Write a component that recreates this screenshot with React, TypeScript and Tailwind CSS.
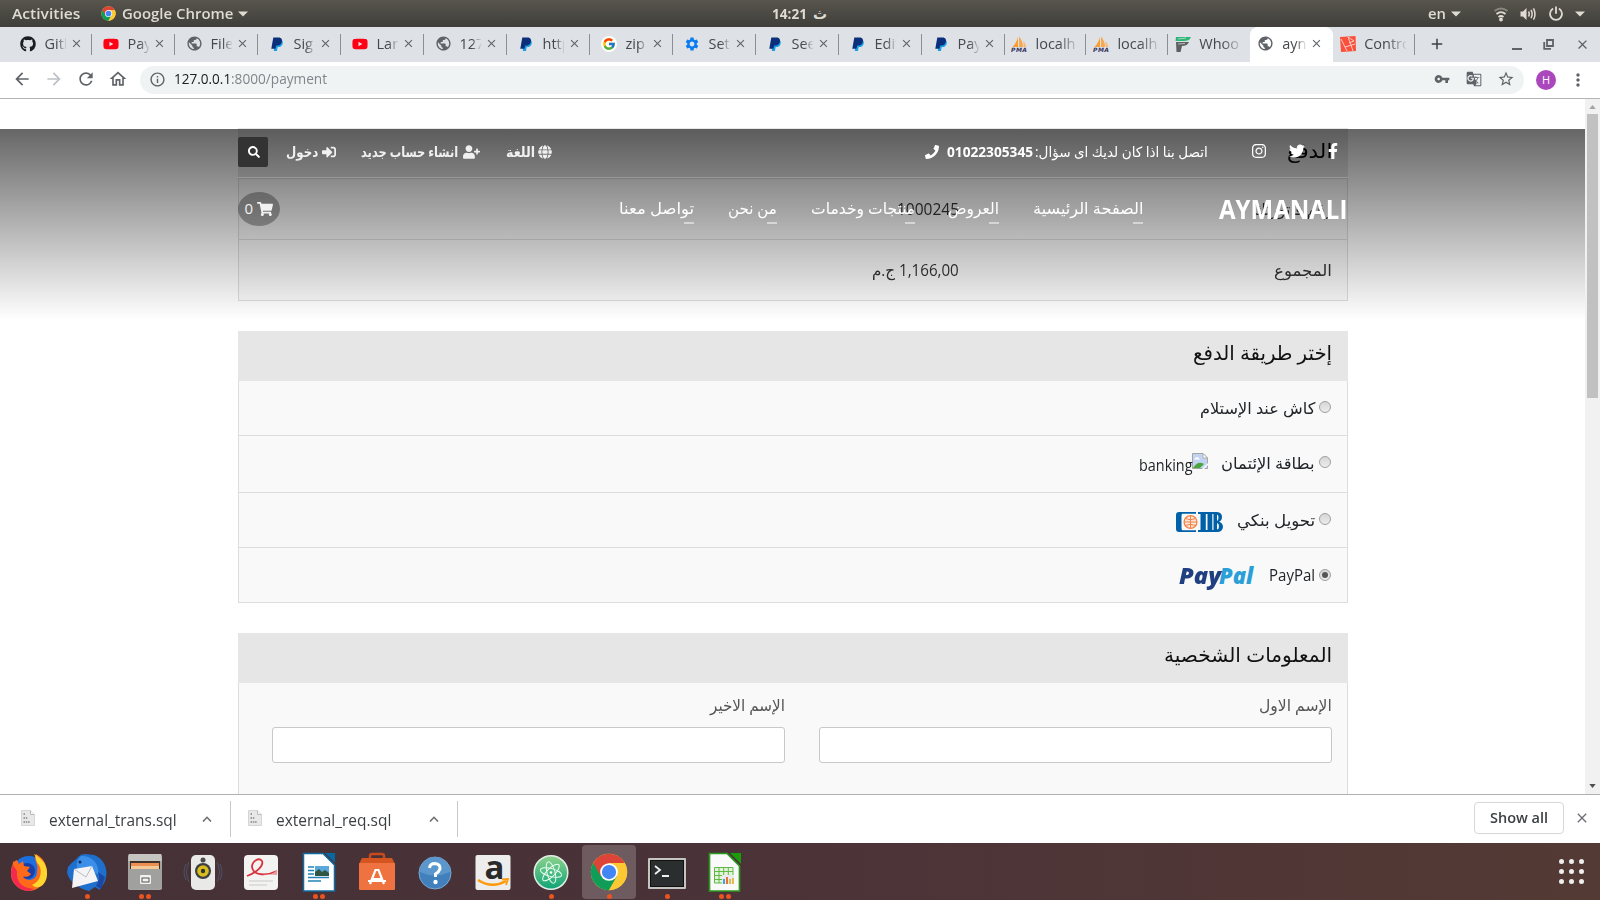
import { useLayoutEffect, useRef, useState, type ReactNode } from 'react';
import { FaFacebookF, FaGithub, FaGlobe, FaInstagram, FaPhone, FaSearch, FaShoppingCart, FaSignInAlt, FaTwitter, FaUserPlus, FaYoutube } from 'react-icons/fa';
import { FcGoogle } from 'react-icons/fc';
import { MdAdd, MdArrowBack, MdArrowForward, MdClose, MdGTranslate, MdInfoOutline, MdMoreVert, MdOutlineHome, MdPublic, MdRefresh, MdSettings, MdStarBorder, MdVpnKey } from 'react-icons/md';

/* One line of text condensed or widened so that it fills its box. */
function Fit({ className = '', children }: { className?: string; children: ReactNode }) {
  const box = useRef<HTMLSpanElement>(null);
  const inner = useRef<HTMLSpanElement>(null);
  const [scale, setScale] = useState(1);
  useLayoutEffect(() => {
    if (box.current && inner.current) setScale(box.current.offsetWidth / inner.current.offsetWidth);
  }, [children]);
  return (
    <span ref={box} className={`block shrink-0 whitespace-nowrap ${className}`}>
      <span ref={inner} className="block w-max origin-left rtl:origin-right" style={{ transform: `scaleX(${scale})` }}>
        {children}
      </span>
    </span>
  );
}

function ChromeLogo({ className }: { className: string }) {
  return (
    <svg viewBox="0 0 48 48" className={className}>
      <circle cx="24" cy="24" r="23" fill="#fcc934" />
      <path d="M24 24 L4.100 12.500 A23 23 0 0 0 24 47 L34 29.700 Z" fill="#0f9d58" />
      <path d="M24 24 L14 29.800 L4.100 12.500 A23 23 0 0 1 43.900 12.500 L24 12.500 Z" fill="#db4437" />
      <path d="M24 12.500 H43.900 A23 23 0 0 1 24 47 L34 29.800 Z" fill="#fcc934" />
      <circle cx="24" cy="24" r="11.200" fill="#fff" />
      <circle cx="24" cy="24" r="9" fill="#4285f4" />
    </svg>
  );
}

function PaypalMark() {
  return (
    <svg viewBox="0 0 16 16" className="size-4">
      <path d="M6 4 H12 C14.300 4.500 14.300 8 12.600 9.800 C11.500 11 10 11.200 8.600 11.200 L8 15 H4.800 Z" fill="#1aa0e8" />
      <path d="M4.300 1.500 H9.500 C12.600 1.500 13.600 3.800 12.700 6.400 C11.900 8.800 9.900 9.600 7.300 9.600 L6.400 12.800 H2.300 Z" fill="#0b2f7a" />
    </svg>
  );
}

function PmaMark() {
  return (
    <svg viewBox="0 0 16 16" className="size-4">
      <path d="M7 1 V11 H1.500 C4 8.500 6 5 7 1 Z" fill="#f89c32" />
      <path d="M8 0.500 C10.500 3 12 7 12 11 H8 Z" fill="#f7a94c" />
      <path d="M12.500 5 C14 7 15 9 15.400 11 H12.500 Z" fill="#f9b978" />
      <text x="0" y="16" fontSize="6" fontWeight="bold" fontStyle="italic" fontFamily="DejaVu Sans" fill="#35355f" textLength="16">PMA</text>
    </svg>
  );
}

function ForgeMark() {
  return (
    <svg viewBox="0 0 16 16" className="size-4">
      <path d="M1 1 H16 C15 4 12 5 9 5 H0.500 Z" fill="#2bb673" />
      <path d="M1 6 H14 C12.500 9 10 10 7 10 L5.500 16 H1.500 Z" fill="#5d6060" />
      <path d="M3 3 L11 2 M3 8 L10 7.500" stroke="#dee1e6" strokeWidth=".7" />
    </svg>
  );
}

function LaravelMark() {
  return (
    <svg viewBox="0 0 16 16" className="size-4">
      <path d="M0 1 L15.500 0 L16 15 L1 16 Z" fill="#fb503b" />
      <path d="M1 3 L5 11 L15 8 M5 11 L7 15 M8 1 L11 9 L13 15 M8 1 L14 5 L9 7" fill="none" stroke="#fbd9d5" strokeWidth=".9" />
    </svg>
  );
}

type Kind = 'git' | 'yt' | 'globe' | 'pp' | 'google' | 'gear' | 'pma' | 'forge' | 'laravel';

function TabIcon({ kind }: { kind: Kind }) {
  switch (kind) {
    case 'git': return <FaGithub className="size-4 text-[#1b1f23]" />;
    case 'yt': return <FaYoutube className="size-4 text-[#ff0014]" />;
    case 'globe': return <MdPublic className="size-[17px] text-[#5f6368]" />;
    case 'pp': return <PaypalMark />;
    case 'google': return <span className="flex size-4 items-center justify-center rounded-full bg-white"><FcGoogle className="size-[14px]" /></span>;
    case 'gear': return <MdSettings className="size-4 text-[#0a7cf0]" />;
    case 'pma': return <PmaMark />;
    case 'forge': return <ForgeMark />;
    default: return <LaravelMark />;
  }
}

const tabs: { kind: Kind; title: string; wide?: boolean; active?: boolean }[] = [
  { kind: 'git', title: 'Gith' }, { kind: 'yt', title: 'Pay' }, { kind: 'globe', title: 'File' },
  { kind: 'pp', title: 'Sig' }, { kind: 'yt', title: 'Lara' }, { kind: 'globe', title: '127.' },
  { kind: 'pp', title: 'http' }, { kind: 'google', title: 'zip' }, { kind: 'gear', title: 'Sett' },
  { kind: 'pp', title: 'See' }, { kind: 'pp', title: 'Edit' }, { kind: 'pp', title: 'Pay' },
  { kind: 'pma', title: 'localh', wide: true }, { kind: 'pma', title: 'localh', wide: true },
  { kind: 'forge', title: 'Whoo', wide: true }, { kind: 'globe', title: 'ayn', active: true },
  { kind: 'laravel', title: 'Contro', wide: true },
];

function SystemBar() {
  return (
    <div className="flex h-[27px] items-center bg-linear-to-b from-[#58554d] to-[#3f3e3a] pl-3 text-[14px] font-semibold leading-[27px] text-[#dfdbd2]">
      <Fit className="w-[68px]">Activities</Fit>
      <ChromeLogo className="ml-[21px] size-[15px]" />
      <Fit className="ml-[6px] w-[111px]">Google Chrome</Fit>
      <Caret className="ml-[5px]" />
      <Fit className="ml-[524px] w-[35px] font-bold">14:21</Fit>
      <Fit className="ml-[6px] w-[14px]">ث</Fit>
      <Fit className="ml-[601px] w-[18px]">en</Fit>
      <Caret className="ml-[5px]" />
      <svg viewBox="0 0 16 16" className="ml-[32px] size-4" fill="none" stroke="#dfdbd2" strokeWidth="1.800">
        <path d="M1.500 5 Q8 0 14.500 5" opacity=".4" /><path d="M3.500 8 Q8 4.200 12.500 8" /><path d="M5.500 11 Q8 9 10.500 11" /><circle cx="8" cy="13.500" r="1" fill="#dfdbd2" />
      </svg>
      <svg viewBox="0 0 16 16" className="ml-[11px] size-4" fill="none" stroke="#dfdbd2" strokeWidth="1.500">
        <path d="M0.500 5.500 H3 L6.500 2 V14 L3 10.500 H0.500 Z" fill="#dfdbd2" stroke="none" /><path d="M8.500 5.500 Q10 8 8.500 10.500 M11 3.800 Q13.300 8 11 12.200 M13.500 2.300 Q16.500 8 13.500 13.700" />
      </svg>
      <svg viewBox="0 0 16 16" className="ml-[12px] size-4" fill="none" stroke="#dfdbd2" strokeWidth="1.800" strokeLinecap="round">
        <path d="M4.500 3 A6 6 0 1 0 11.500 3 M8 1.200 V7" />
      </svg>
      <Caret className="ml-[11px]" />
    </div>
  );
}

function Caret({ className }: { className: string }) {
  return <svg viewBox="0 0 10 6" className={`h-[6px] w-[10px] shrink-0 ${className}`}><path d="M0 .5 H10 L5 5.500 Z" fill="#dfdbd2" /></svg>;
}

function tabWidth(wide?: boolean, active?: boolean) {
  if (active) return 'w-[83px] rounded-t-lg bg-white pl-[7px] pr-[4px]';
  return wide ? 'w-[81.900px] pl-[6px]' : 'w-[83px] pl-[11px]';
}

function titleWidth(wide?: boolean, active?: boolean) {
  if (active) return 'w-[24px]';
  return wide ? 'w-[42px]' : 'w-[21px]';
}

function TabStrip() {
  return (
    <div className="flex h-[35px] bg-[#dee1e6] pl-[8.500px] text-[14.500px] text-[#45494d]">
      {tabs.map((t, i) => (
        <div key={i} className={`flex h-[35px] shrink-0 items-center pb-[2px] ${tabWidth(t.wide, t.active)}`}>
          <span className="flex h-4 w-[17px] shrink-0 items-center justify-center"><TabIcon kind={t.kind} /></span>
          <span className={`ml-[8px] shrink-0 overflow-hidden whitespace-nowrap leading-[22px] [mask-image:linear-gradient(90deg,black_55%,transparent_105%)] ${titleWidth(t.wide, t.active)}`}>{t.title}</span>
          {!t.wide && <MdClose className="ml-[4px] size-[13px] shrink-0 text-[#5f6368]" />}
          <span className={`ml-auto mt-[2px] h-[21px] w-px ${t.active || i === 14 ? 'bg-transparent' : 'bg-[#8b8f94]'}`} />
        </div>
      ))}
      <div className="flex h-[35px] items-center pb-px text-[#3c4043]">
        <MdAdd className="ml-[13px] size-[18px]" />
        <span className="ml-[66px] mt-[9px] h-[2px] w-[10px] bg-[#5f6368]" />
        <svg viewBox="0 0 12 12" className="ml-[21px] size-[12px]" fill="none" stroke="#5f6368" strokeWidth="1.800"><path d="M4 2 H10 V8 H4 Z M1.200 4 V10.800 H8" /></svg>
        <MdClose className="ml-[20px] size-[15px] text-[#5f6368]" />
      </div>
    </div>
  );
}

function Toolbar() {
  return (
    <div className="flex h-[37px] shrink-0 items-center border-b border-[#b4b4b4] bg-white pl-3 text-[#5f6368]">
      <MdArrowBack className="-mt-[2px] size-5" />
      <MdArrowForward className="-mt-[2px] ml-3 size-5 text-[#bdc1c6]" />
      <MdRefresh className="-mt-[2px] ml-3 size-5" />
      <MdOutlineHome className="-mt-[2px] ml-3 size-5" />
      <div className="ml-3 flex h-[28px] w-[1384px] items-center rounded-full bg-[#eff3f4] pb-[2px] pl-[9px] text-[14.500px]">
        <MdInfoOutline className="size-[17px]" />
        <Fit className="ml-[8px] w-[57px] text-[#202124]">127.0.0.1</Fit>
        <Fit className="w-[96px] text-[#80868b]">:8000/payment</Fit>
        <MdVpnKey className="ml-[1107px] size-[16px]" />
        <MdGTranslate className="ml-[16px] size-[16px]" />
        <MdStarBorder className="ml-[15px] size-[18px]" />
      </div>
      <span className="ml-[12px] flex size-5 items-center justify-center rounded-full bg-[#ab47bc] text-[11px] text-white">H</span>
      <MdMoreVert className="ml-[12px] size-5" />
    </div>
  );
}

const nav = [
  { text: 'الصفحة الرئيسية', cls: 'w-[110px]' },
  { text: 'العروض', cls: 'w-[51px] mr-[34px]' },
  { text: 'منتجات وخدمات', cls: 'w-[104px] mr-[33px]' },
  { text: 'من نحن', cls: 'w-[49px] mr-[34px]' },
  { text: 'تواصل معنا', cls: 'w-[75px] mr-[34px]' },
];

/* Translucent header that stays above the scrolled page. */
function SiteHeader() {
  return (
    <div className="absolute inset-x-0 top-[30px] h-[191px] bg-linear-to-b from-black/60 to-transparent text-white">
      <div className="mr-[237px] w-[1110px]">
        <div className="flex h-[49px] items-start border-b border-white/20 pr-[10px] text-[14px]">
          <FaFacebookF className="mt-[14px] h-4 w-[10px]" />
          <FaTwitter className="mr-[23px] mt-[14px] size-4" />
          <FaInstagram className="mr-[22px] mt-[14px] size-4" />
          <Fit className="mr-[43px] mt-[12px] w-[173px] leading-[22px]">اتصل بنا اذا كان لديك اى سؤال:</Fit>
          <Fit className="mr-[2px] mt-[12px] w-[86px] font-bold leading-[22px]">01022305345</Fit>
          <FaPhone className="mr-[8px] mt-[16px] size-[14px]" />
          <FaGlobe className="mr-[373px] mt-[16px] size-[14px] opacity-90" />
          <Fit className="mr-[3px] mt-[12px] w-[29px] font-bold leading-[22px] opacity-90">اللغة</Fit>
          <FaUserPlus className="mr-[26px] mt-[16px] h-[14px] w-[17px] opacity-90" />
          <Fit className="mr-[5px] mt-[12px] w-[97px] font-bold leading-[22px] opacity-90">انشاء حساب جديد</Fit>
          <FaSignInAlt className="mr-[25px] mt-[16px] size-[14px] opacity-90" />
          <Fit className="mr-[4px] mt-[12px] w-[32px] font-bold leading-[22px] opacity-90">دخول</Fit>
          <span className="mr-auto mt-[8px] flex size-[30px] items-center justify-center rounded-xs bg-[#333]"><FaSearch className="mb-px ml-px size-3" /></span>
        </div>
        <div className="flex h-[61px] items-center">
          <Fit className="mr-px w-[128px] text-[27px] font-bold leading-[34px]">AYMANALI</Fit>
          <div className="mr-[76px] mt-[2px] flex">
            {nav.map((n) => (
              <div key={n.text} className={`flex h-[28px] flex-col text-[16px] leading-[24px] ${n.cls}`}>
                <Fit className="h-[26px] w-full">{n.text}</Fit>
                <span className="h-[2px] w-[10px] shrink-0 bg-[#d6d6d6]" />
              </div>
            ))}
          </div>
          <div className="mr-auto flex h-[34px] w-[42px] items-center justify-center gap-[4px] rounded-[50%] bg-black/30 text-[15px] text-white/90">
            <FaShoppingCart className="size-[16px]" />
            <span className="w-[8px]">0</span>
          </div>
        </div>
      </div>
    </div>
  );
}

function Radio({ on = false, className }: { on?: boolean; className: string }) {
  return (
    <span className={`flex size-[12px] shrink-0 items-center justify-center rounded-full border border-[#a0a0a0] bg-linear-to-b from-[#d6d6d6] to-[#ececec] ${className}`}>
      {on && <span className="size-[6px] rounded-full bg-[#555]" />}
    </span>
  );
}

function CibLogo() {
  return (
    <svg viewBox="0 0 47 20" className="h-[20px] w-[47px]">
      <path d="M3 0 H20 V1.800 H6.500 Q5.500 1.800 5.500 4 V16 Q5.500 18.200 6.500 18.200 H20 V20 H3 Q0 20 0 17 V3 Q0 0 3 0 Z" fill="#0061a8" />
      <circle cx="14.500" cy="10" r="6.400" fill="#fbe6d8" stroke="#f58345" strokeWidth="1.300" />
      <path d="M8 10 H21 M14.500 3.500 V16.500 M9.500 6.500 Q14.500 9 19.500 6.500 M9.500 13.500 Q14.500 11 19.500 13.500" fill="none" stroke="#f58345" strokeWidth="1" />
      <path d="M22 0 H41 Q46 .5 46 5 Q46 8.500 43 9.700 Q47 11 47 15 Q46.500 20 41 20 H22 V18 H24 V2 H22 Z" fill="#0061a8" />
      <path d="M22 2 H24.500 V18 H22 Z M29.800 2 H31.500 V18 H29.800 Z M36.300 2 H37.500 V18 H36.300 Z" fill="#f9f9f9" />
      <path d="M41 2.500 Q42.500 3 42.500 5.500 Q42.500 8.500 41 9 Z M41 11 Q43 11.400 43 14.500 Q43 17 41 17.600 Z" fill="#f9f9f9" />
    </svg>
  );
}

function BrokenImage() {
  return (
    <svg viewBox="0 0 16 16" className="size-4">
      <path d="M.5 .5 H11 L15.500 5 V15.500 H.5 Z" fill="#c3d4f2" stroke="#a5a5a5" />
      <path d="M11 .5 V5 H15.500 Z" fill="#fff" stroke="#a5a5a5" strokeWidth=".8" />
      <path d="M1 15 Q6 7 12 11 L8 15 Z" fill="#4aa63c" /><path d="M2 6.500 Q5 2 8 6.500 Z" fill="#fff" />
      <path d="M16 10 L10 16 H12 L16 12 Z" fill="#fff" />
    </svg>
  );
}

function Page() {
  return (
    <div dir="rtl" className="relative h-[695px] w-[1585px] overflow-hidden bg-white text-[16px] text-[#333]">
      <div className="mr-[237px] w-[1110px] pt-[29px]">
        <div className="h-[50px] bg-[#e6e6e6] pr-4 pt-[9px] text-[20px] leading-[28px] text-black">
          <Fit className="w-[45px]">الدفع</Fit>
        </div>
        <div className="h-[123px] border border-[#ddd] bg-[#f9f9f9]">
          <div className="flex h-[61px] items-center border-b border-[#ddd] pr-[15px]">
            <Fit className="w-[79px]">رقم فاتورتك</Fit><Fit className="mr-[294px] w-[62px]">1000245</Fit>
          </div>
          <div className="flex h-[60px] items-center pb-px pr-[15px]">
            <Fit className="w-[58px]">المجموع</Fit>
            <Fit className="mr-[315px] w-[87px]">1,166,00 ج.م</Fit>
          </div>
        </div>
        <div className="mt-[30px] h-[50px] bg-[#e6e6e6] pr-4 pt-[8px] text-[20px] leading-[28px] text-[#111]">
          <Fit className="w-[139px]">إختر طريقة الدفع</Fit>
        </div>
        <div className="border border-t-0 border-[#ddd] bg-[#f9f9f9] text-[#212529]">
          <div className="flex h-[55px] items-center border-b border-[#ddd] pr-[16px]">
            <Radio className="mb-[2px]" /><Fit className="mr-[4px] w-[115px]">كاش عند الإستلام</Fit>
          </div>
          <div className="flex h-[57px] items-center border-b border-[#ddd] pr-[16px]">
            <Radio className="mb-[4px]" /><Fit className="mb-[2px] mr-[4px] w-[94px]">بطاقة الإئتمان</Fit>
            <span className="mb-[7px] mr-[13px]"><BrokenImage /></span><Fit className="mt-px w-[53px]">banking</Fit>
          </div>
          <div className="flex h-[55px] items-center border-b border-[#ddd] pr-[16px]">
            <Radio className="mb-[2px]" /><Fit className="mr-[4px] w-[78px]">تحويل بنكي</Fit>
            <span className="mr-[14px] mt-[3px]"><CibLogo /></span>
          </div>
          <div className="flex h-[54px] items-center pr-[16px]">
            <Radio on className="mb-px" /><Fit className="mr-[4px] w-[46px]">PayPal</Fit>
            <div dir="ltr" className="mb-px mr-[14px] flex w-[76px] text-[22px] font-extrabold italic leading-[26px]">
              <Fit className="ml-[3px] w-[42px] text-[#1f3f80]">Pay</Fit><Fit className="-ml-[5px] w-[34px] text-[#2a9fd8]">Pal</Fit>
            </div>
          </div>
        </div>
        <div className="mt-[30px] h-[50px] bg-[#e6e6e6] pr-4 pt-[8px] text-[20px] leading-[28px] text-[#111]">
          <Fit className="w-[168px]">المعلومات الشخصية</Fit>
        </div>
        <div className="flex h-[200px] gap-[34px] border border-t-0 border-[#ddd] bg-[#f9f9f9] pr-[15px] pt-[10px] text-[#555]">
          <div className="w-[513px]">
            <Fit className="w-[73px] leading-[24px]">الإسم الاول</Fit>
            <div className="mt-[10px] h-[36px] rounded-[3px] border border-[#c8c8c8] bg-white" />
          </div>
          <div className="w-[513px]">
            <Fit className="w-[75px] leading-[24px]">الإسم الاخير</Fit>
            <div className="mt-[10px] h-[36px] rounded-[3px] border border-[#c8c8c8] bg-white" />
          </div>
        </div>
      </div>
      <SiteHeader />
    </div>
  );
}

function Scrollbar() {
  return (
    <div className="flex h-[695px] w-[15px] flex-col items-center bg-[#f1f1f1]">
      <svg viewBox="0 0 8 5" className="mt-[6px] h-[4px] w-[7px]"><path d="M4 0 L8 5 H0 Z" fill="#a3a3a3" /></svg>
      <div className="mt-[5px] h-[284px] w-[11px] bg-[#c1c1c1]" />
      <svg viewBox="0 0 8 5" className="mb-[6px] mt-auto h-[4px] w-[7px]"><path d="M0 0 H8 L4 5 Z" fill="#505050" /></svg>
    </div>
  );
}

function DownloadItem({ name, w }: { name: string; w: string }) {
  return (
    <div className="flex h-[36px] w-[227px] items-center border-r border-[#c8c8c8]">
      <svg viewBox="0 0 14 16" className="-mt-[2px] ml-[17px] h-4 w-[14px]">
        <path d="M.5 .5 H9.500 L13.500 4.500 V15.500 H.5 Z" fill="#e8e8e8" stroke="#d5d5d5" /><path d="M9.500 .5 V4.500 H13.500" fill="#f8f8f8" stroke="#bbb" />
        <path d="M2.500 4 H4 M2.500 8 H6.500 M2.500 12 H9" stroke="#9d9d9d" strokeWidth="2" strokeDasharray="1.500 .8" />
      </svg>
      <Fit className={`ml-[14px] mt-px ${w}`}>{name}</Fit>
      <svg viewBox="0 0 10 6" className="ml-auto mr-[18px] h-[6px] w-[10px]"><path d="M1 5.500 L5 1.300 L9 5.500" fill="none" stroke="#6b6f73" strokeWidth="1.600" /></svg>
    </div>
  );
}

const Firefox = () => (
  <svg viewBox="0 0 40 40" className="size-10">
    <circle cx="20" cy="21" r="17" fill="#1d6fe0" />
    <circle cx="18" cy="19" r="8" fill="#1a3fa8" />
    <path d="M4 10 L8 8 L10 12 L14 9 L15 14 L21 15 L18 19 L22 22 C18 27 15 23 14 25 C20 31 28 27 28 20 C30 11 24 9 27 2 C36 7 39 15 37 24 C35 33 28 39 19 39 C8 38 1 29 2 20 C2 15 4 13 4 10 Z" fill="#ff6a1a" />
    <path d="M25 2 C28 6 26 9 30 13 C34 20 31 30 23 33 C31 40 39 30 38 20 C38 12 32 6 25 2 Z" fill="#ffd52e" />
    <path d="M4 13 L2 20 C2 31 10 39 20 39 L25 37 C12 36 7 29 8 19 Z" fill="#f3294f" />
  </svg>
);
const Thunderbird = () => (
  <svg viewBox="0 0 40 40" className="size-10">
    <path d="M1 15 C6 9 9 8 11 5 C17 0 22 3 27 3 C36 6 41 16 39 25 C38 32 34 34 33 38 L28 35 L22 39 C10 36 1 28 0 20 Z" fill="#1f6fcd" />
    <path d="M14 4 C24 3 33 12 31 22 L10 16 C9 10 11 7 14 4 Z" fill="#3b8fe8" />
    <path d="M7 17 L25 14 L31 29 L5 36 Z" fill="#f4f4f6" /><path d="M7 17 L19 25 L25 14" fill="none" stroke="#b9bcc4" />
    <circle cx="13" cy="10" r="1.500" fill="#0b2f66" /><path d="M31 20 Q34 26 29 34 L34 37 L38 25 Z" fill="#1b47a5" />
  </svg>
);
const Files = () => (
  <svg viewBox="0 0 40 40" className="size-10">
    <rect x="3" y="2" width="34" height="36" rx="2" fill="#a5a5a3" /><path d="M4 2 H36 L37 9 H3 Z" fill="#c4c4c1" />
    <rect x="5" y="9" width="30" height="9" fill="#40302a" /><rect x="6" y="11" width="28" height="3" fill="#ec8f52" /><rect x="6" y="14" width="28" height="3" fill="#f5c996" />
    <rect x="3" y="17" width="34" height="20" fill="#a0a09e" /><rect x="15" y="23" width="11" height="9" rx="1" fill="#f2f2f2" /><rect x="17" y="26" width="7" height="4" fill="none" stroke="#555" />
  </svg>
);
const Speaker = () => (
  <svg viewBox="0 0 40 40" className="size-10">
    <path d="M6 10 Q1 20 6 30 M34 10 Q39 20 34 30 M3 12 Q-1 20 3 28 M37 12 Q41 20 37 28" fill="none" stroke="#4f5068" strokeWidth="1" />
    <rect x="8" y="3" width="24" height="35" rx="5" fill="#e9e9e7" /><circle cx="20" cy="8" r="2.500" fill="#4b4b4b" /><circle cx="20" cy="19" r="8" fill="#3f3f42" /><circle cx="20" cy="19" r="5.800" fill="#d9bd1d" /><circle cx="20" cy="19" r="2.200" fill="#333" />
  </svg>
);
const Document = () => (
  <svg viewBox="0 0 40 40" className="size-10">
    <rect x="3" y="3" width="34" height="35" rx="4" fill="#f3f3f2" />
    <path d="M6 24 C16 20 23 14 21 9 C18 5 11 9 11 15 C12 24 26 24 36 19" fill="none" stroke="#d8343e" strokeWidth="1.800" /><path d="M22 22 Q30 24 36 18 V23 Z" fill="#e99a9e" />
    <path d="M8 29 H32 M8 33 H26" stroke="#c9c9c9" />
  </svg>
);
const Writer = () => (
  <svg viewBox="0 0 40 40" className="size-10">
    <path d="M4.500 1.500 H24 L35.500 13 V39 H4.500 Z" fill="#fff" stroke="#0f6ba1" strokeWidth="1.500" /><path d="M26 1 H36 V11 Z" fill="#0868a0" />
    <path d="M9 15 H15 M9 18.500 H15 M9 22 H15 M9 25.500 H30 M9 29 H22" stroke="#2582b7" strokeWidth="1.600" /><rect x="16" y="14" width="14" height="10" fill="#5aa9dc" /><path d="M16 24 V20 L20 17 L23 20 L26 18 L30 21 V24 Z" fill="#315543" />
  </svg>
);
const Software = () => (
  <svg viewBox="0 0 40 40" className="size-10">
    <path d="M13 10 V4 Q13 2 15 2 H25 Q27 2 27 4 V10" fill="none" stroke="#c64a1d" strokeWidth="2.500" /><path d="M5 6 H35 L38 12 H2 Z" fill="#d4551f" />
    <rect x="2" y="11" width="36" height="27" rx="1" fill="#ee7340" />
    <path d="M13 32 L18.500 18 H21.500 L27 32 M15 27 H25 M11 29 H29" fill="none" stroke="#fff" strokeWidth="2.200" />
  </svg>
);
const Help = () => (
  <svg viewBox="0 0 40 40" className="size-10">
    <circle cx="20" cy="21" r="16" fill="#4180bd" stroke="#79a8d4" /><path d="M5 20 A15 15 0 0 1 35 20 Q20 27 5 20" fill="#5b97cc" />
    <path d="M14.500 16 Q15 11.500 20 11.500 Q25.500 12 25 17 Q24 20 20.500 22 V25" fill="none" stroke="#fff" strokeWidth="3" /><circle cx="20.500" cy="30" r="2.200" fill="#fff" />
  </svg>
);
const Amazon = () => (
  <svg viewBox="0 0 40 40" className="size-10">
    <rect x="2.500" y="3" width="35" height="35" rx="2" fill="#ededed" /><text x="11.500" y="27" fontSize="33" fontWeight="bold" fontFamily="Open Sans" fill="#2a2a2a">a</text>
    <path d="M5 28 Q19 37 33 29" fill="none" stroke="#ff9a0a" strokeWidth="2.500" /><path d="M29 27.500 L35 27 L33 33" fill="none" stroke="#ff9a0a" strokeWidth="1.800" />
  </svg>
);
const Atom = () => (
  <svg viewBox="0 0 40 40" className="size-10">
    <defs><linearGradient id="atom" x1="0" y1="0" x2="0" y2="1"><stop offset="0" stopColor="#8fd38c" /><stop offset="1" stopColor="#0fa476" /></linearGradient></defs>
    <circle cx="20" cy="20.500" r="16.800" fill="url(#atom)" stroke="#e3eee8" strokeWidth="1.500" />
    <g fill="none" stroke="#e8fff4" strokeWidth="1"><ellipse cx="20" cy="20.500" rx="11" ry="4" transform="rotate(15 20 20.500)" /><ellipse cx="20" cy="20.500" rx="11" ry="4" transform="rotate(75 20 20.500)" /><ellipse cx="20" cy="20.500" rx="11" ry="4" transform="rotate(135 20 20.500)" /></g><circle cx="20" cy="20.500" r="1.300" fill="#fff" />
  </svg>
);
const Terminal = () => (
  <svg viewBox="0 0 40 40" className="size-10">
    <rect x="1" y="6" width="38" height="31" rx="1" fill="#c4c4c1" /><rect x="3.500" y="8.500" width="33" height="26" fill="#2b2e2f" stroke="#111" />
    <path d="M8 14 L13 18 L8 22 M15 24 H22" fill="none" stroke="#f0f0f0" strokeWidth="1.800" />
  </svg>
);
const Calc = () => (
  <svg viewBox="0 0 40 40" className="size-10">
    <path d="M4.500 1.500 H22 L34.500 14 V39 H4.500 Z" fill="#fafafa" stroke="#2b9a1b" strokeWidth="1.700" /><path d="M25 1 H36 V12 Z" fill="#1a9d0a" />
    <path d="M9.500 15.500 H28 V31 H9.500 Z M9.500 19.500 H28 M9.500 23.500 H28 M9.500 27.500 H28 M14 15.500 V31 M18.700 15.500 V31 M23.300 15.500 V31" fill="#e3f4da" stroke="#5fb944" /><rect x="17" y="23" width="12" height="9" fill="#e9ecef" />
    <path d="M19 27 V32" stroke="#4aa0d0" strokeWidth="2" /><path d="M22 25 V32" stroke="#e8703a" strokeWidth="2" /><path d="M25 27 V32 M28 26 V32" stroke="#e0b93b" strokeWidth="1.800" />
  </svg>
);

const dock: { icon: ReactNode; dots: number; on?: boolean }[] = [
  { icon: <Firefox />, dots: 0 }, { icon: <Thunderbird />, dots: 1 }, { icon: <Files />, dots: 2 }, { icon: <Speaker />, dots: 0 },
  { icon: <Document />, dots: 0 }, { icon: <Writer />, dots: 2 }, { icon: <Software />, dots: 0 }, { icon: <Help />, dots: 0 },
  { icon: <Amazon />, dots: 0 }, { icon: <Atom />, dots: 1 }, { icon: <ChromeLogo className="size-[38px]" />, dots: 1, on: true },
  { icon: <Terminal />, dots: 1 }, { icon: <Calc />, dots: 2 },
];

export default function App() {
  return (
    <div className="flex h-[900px] w-[1600px] flex-col overflow-hidden bg-white font-['Open_Sans','DejaVu_Sans',sans-serif]">
      <SystemBar />
      <TabStrip />
      <Toolbar />
      <div className="flex h-[695px] shrink-0"><Page /><Scrollbar /></div>
      <div className="flex h-[49px] shrink-0 items-center border-t border-[#b0b0b0] bg-white pl-[4px] text-[16px] text-[#3c4043]">
        <DownloadItem name="external_trans.sql" w="w-[128px]" />
        <DownloadItem name="external_req.sql" w="w-[115px]" />
        <div className="-mt-[2px] ml-auto flex h-[32px] w-[90px] items-center justify-center rounded-[4px] border border-[#d5d7da] pb-[2px] text-[14px] font-semibold"><Fit className="w-[58px]">Show all</Fit></div>
        <MdClose className="-mt-[2px] ml-[10px] mr-[10px] size-4 text-[#6b6f73]" />
      </div>
      <div className="flex h-[57px] shrink-0 items-start bg-linear-to-r from-[#443136] via-[#4b3338] to-[#543a34]">
        {dock.map((d, i) => (
          <div key={i} className="flex h-[57px] w-[58px] justify-center pt-[2px]">
            <div className={`relative flex h-[54px] w-[54px] items-center justify-center rounded-[4px] ${d.on ? 'bg-white/20' : ''}`}>
              {d.icon}
              <div className="absolute inset-x-0 bottom-0 flex justify-center gap-[2px]">
                {Array.from({ length: d.dots }, (_, k) => <span key={k} className="size-[5px] rounded-full bg-[#e95420]" />)}
              </div>
            </div>
          </div>
        ))}
        <div className="ml-auto mr-[16px] mt-[16px] grid grid-cols-3 gap-[5px]">
          {Array.from({ length: 9 }, (_, k) => <span key={k} className="size-[5px] rounded-full bg-[#eee]" />)}
        </div>
      </div>
    </div>
  );
}
